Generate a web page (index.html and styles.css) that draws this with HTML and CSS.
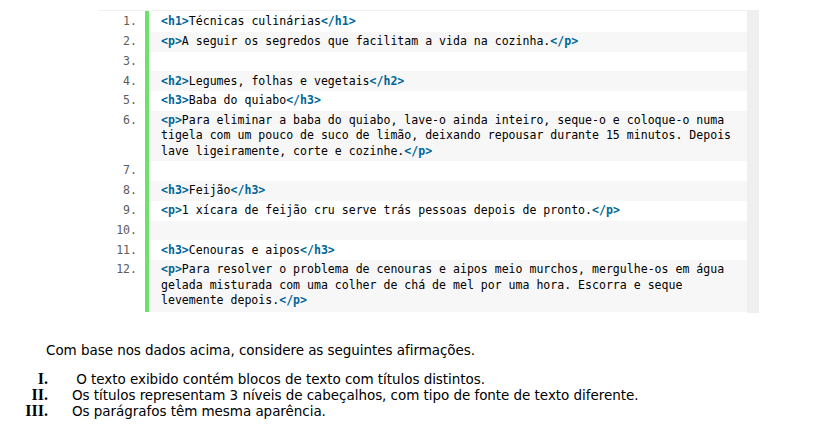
FILE: index.html
```
<!DOCTYPE html>
<html lang="pt">
<head>
<meta charset="utf-8">
<title>Técnicas culinárias</title>
<link rel="stylesheet" href="styles.css">
</head>
<body>
<div class="code-block">
  <div class="lines">
    <div class="row"><div class="num">1.</div><div class="code"><b class="tag">&lt;h1&gt;</b>Técnicas culinárias<b class="tag">&lt;/h1&gt;</b></div></div>
    <div class="row"><div class="num">2.</div><div class="code"><b class="tag">&lt;p&gt;</b>A seguir os segredos que facilitam a vida na cozinha.<b class="tag">&lt;/p&gt;</b></div></div>
    <div class="row"><div class="num">3.</div><div class="code"> </div></div>
    <div class="row"><div class="num">4.</div><div class="code"><b class="tag">&lt;h2&gt;</b>Legumes, folhas e vegetais<b class="tag">&lt;/h2&gt;</b></div></div>
    <div class="row"><div class="num">5.</div><div class="code"><b class="tag">&lt;h3&gt;</b>Baba do quiabo<b class="tag">&lt;/h3&gt;</b></div></div>
    <div class="row"><div class="num">6.</div><div class="code"><b class="tag">&lt;p&gt;</b>Para eliminar a baba do quiabo, lave-o ainda inteiro, seque-o e coloque-o numa<br>tigela com um pouco de suco de limão, deixando repousar durante 15 minutos. Depois<br>lave ligeiramente, corte e cozinhe.<b class="tag">&lt;/p&gt;</b></div></div>
    <div class="row"><div class="num">7.</div><div class="code"> </div></div>
    <div class="row"><div class="num">8.</div><div class="code"><b class="tag">&lt;h3&gt;</b>Feijão<b class="tag">&lt;/h3&gt;</b></div></div>
    <div class="row"><div class="num">9.</div><div class="code"><b class="tag">&lt;p&gt;</b>1 xícara de feijão cru serve trás pessoas depois de pronto.<b class="tag">&lt;/p&gt;</b></div></div>
    <div class="row"><div class="num">10.</div><div class="code"> </div></div>
    <div class="row"><div class="num">11.</div><div class="code"><b class="tag">&lt;h3&gt;</b>Cenouras e aipos<b class="tag">&lt;/h3&gt;</b></div></div>
    <div class="row"><div class="num">12.</div><div class="code"><b class="tag">&lt;p&gt;</b>Para resolver o problema de cenouras e aipos meio murchos, mergulhe-os em água<br>gelada misturada com uma colher de chá de mel por uma hora. Escorra e seque<br>levemente depois.<b class="tag">&lt;/p&gt;</b></div></div>
  </div>
  <div class="scroll"></div>
</div>

<p class="intro">Com base nos dados acima, considere as seguintes afirmações.</p>
<ol class="items">
  <li><span class="roman">I.</span><span class="txt">&nbsp;O texto exibido contém blocos de texto com títulos distintos.</span></li>
  <li><span class="roman">II.</span><span class="txt">Os títulos representam 3 níveis de cabeçalhos, com tipo de fonte de texto diferente.</span></li>
  <li><span class="roman">III.</span><span class="txt">Os parágrafos têm mesma aparência.</span></li>
</ol>
</body>
</html>
```
FILE: styles.css
```
html, body {
  margin: 0;
  padding: 0;
  background: #ffffff;
}

body {
  font-family: "DejaVu Sans", sans-serif;
  color: #000;
}

.code-block {
  display: flex;
  width: 661px;
  margin: 10px 0 0 98px;
  border-top: 1px solid #f0f0f0;
}

.lines {
  flex: 1;
  padding-top: 1px;
  padding-bottom: 1px;
}

.scroll {
  width: 12px;
  background: #efefef;
}

.row {
  display: flex;
  font-family: "DejaVu Sans Mono", monospace;
  font-size: 11.55px;
  line-height: 15.2px;
}

.num {
  width: 39px;
  padding: 2.3px 8px 2.3px 0;
  text-align: right;
  color: #5c5c5c;
}

.code {
  flex: 1;
  border-left: 4px solid #6ce26c;
  padding: 2.3px 12px;
  white-space: pre;
  color: #000;
}

.lines .row:first-child .code {
  margin-top: -1px;
  padding-top: 3.3px;
}

.row:nth-child(even) .code {
  background: #f7f7f7;
}

.row:last-child .code {
  padding-bottom: 4px;
}

.tag {
  color: #006699;
  font-weight: bold;
}

.intro {
  margin: 30px 0 0 46px;
  font-size: 13.5px;
  line-height: 15px;
  letter-spacing: -0.05px;
  color: #000;
}

.items {
  list-style: none;
  margin: 13px 0 0 0;
  padding: 0;
  font-size: 13.5px;
  line-height: 15px;
  letter-spacing: -0.05px;
}

.items li {
  display: flex;
  align-items: baseline;
}

.roman {
  width: 48px;
  text-align: right;
  font-family: "Liberation Serif", serif;
  font-weight: bold;
  font-size: 16px;
  letter-spacing: 0;
}

.txt {
  margin-left: 24px;
}
```
